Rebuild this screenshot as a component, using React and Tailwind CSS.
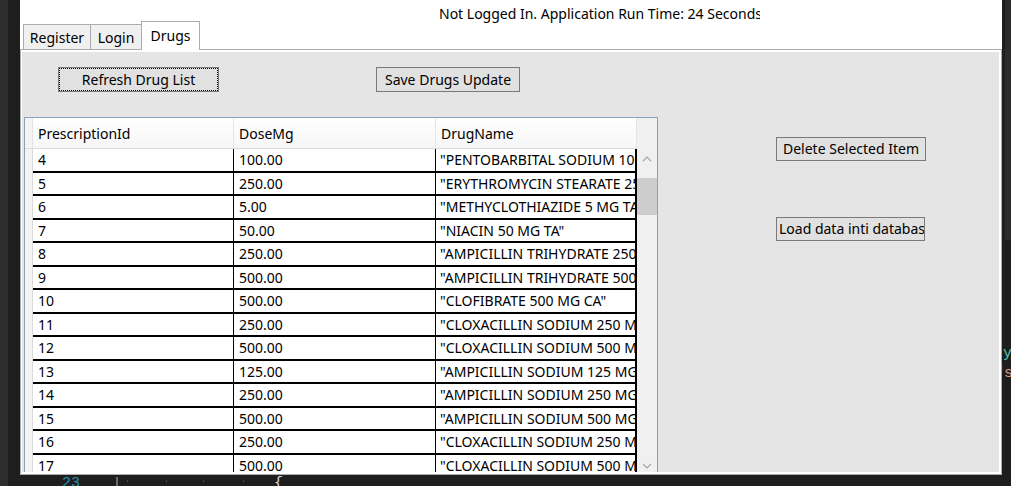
import React from 'react';

const drugs = [
  ['4', '100.00', '"PENTOBARBITAL SODIUM 100 MG CA"'],
  ['5', '250.00', '"ERYTHROMYCIN STEARATE 250 MG TA"'],
  ['6', '5.00', '"METHYCLOTHIAZIDE 5 MG TA"'],
  ['7', '50.00', '"NIACIN 50 MG TA"'],
  ['8', '250.00', '"AMPICILLIN TRIHYDRATE 250 MG CA"'],
  ['9', '500.00', '"AMPICILLIN TRIHYDRATE 500 MG CA"'],
  ['10', '500.00', '"CLOFIBRATE 500 MG CA"'],
  ['11', '250.00', '"CLOXACILLIN SODIUM 250 MG CA"'],
  ['12', '500.00', '"CLOXACILLIN SODIUM 500 MG CA"'],
  ['13', '125.00', '"AMPICILLIN SODIUM 125 MG VI"'],
  ['14', '250.00', '"AMPICILLIN SODIUM 250 MG VI"'],
  ['15', '500.00', '"AMPICILLIN SODIUM 500 MG VI"'],
  ['16', '250.00', '"CLOXACILLIN SODIUM 250 MG CA"'],
  ['17', '500.00', '"CLOXACILLIN SODIUM 500 MG CA"'],
];

function Chevron({ down }) {
  return (
    <svg width="10" height="6" viewBox="0 0 10 6">
      <polyline
        points={down ? '1,1 5,5 9,1' : '1,5 5,1 9,5'}
        fill="none"
        stroke="#a6a6a6"
        strokeWidth="1.2"
      />
    </svg>
  );
}

function WinButton({ className, children, focused }) {
  return (
    <button className={`h-[25px] bg-[#e1e1e1] border border-[#7a7a7a] text-[14px] leading-[18px] text-black shrink-0 ${className}`}>
      {focused ? (
        <span className="flex h-full w-full items-center justify-center border border-dotted border-black">
          {children}
        </span>
      ) : (
        children
      )}
    </button>
  );
}

function DrugGrid() {
  return (
    <div className="ml-[2px] flex h-[360px] w-[634px] shrink-0 border border-[#8aa0bd] bg-white">
      {/* cells */}
      <div className="flex w-[612px] flex-col">
        <div className="flex h-[31px] shrink-0 border-b border-[#dcdcdc] bg-gradient-to-b from-white to-[#f6f6f6]">
          <div className="w-[8px] border-r border-[#e3e3e3] bg-[#f4f4f4]" />
          <div className="flex w-[201px] items-center border-r border-[#e6e6e6] pl-[5px]">PrescriptionId</div>
          <div className="flex w-[202px] items-center border-r border-[#e6e6e6] pl-[5px]">DoseMg</div>
          <div className="flex w-[201px] items-center border-r border-[#e6e6e6] pl-[5px]">DrugName</div>
        </div>
        {drugs.map((d) => (
          <div key={d[0]} className="flex h-[23.5px] shrink-0">
            <div className="w-[8px] border-r border-[#dadada] bg-[#f4f4f4]" />
            <div className="flex w-[201px] items-center border-r border-b-2 border-black pl-[5px]">{d[0]}</div>
            <div className="flex w-[202px] items-center border-r border-b-2 border-black pl-[5px]">{d[1]}</div>
            <div className="flex w-[201px] items-center overflow-hidden whitespace-nowrap border-r-2 border-b-2 border-black pl-[4px]">
              {d[2]}
            </div>
          </div>
        ))}
      </div>
      {/* vertical scrollbar */}
      <div className="flex w-[20px] flex-col bg-[#f0f0f0]">
        <div className="h-[31px] shrink-0 bg-[#f0f0f0]" />
        <div className="flex h-[20px] shrink-0 items-center justify-center">
          <Chevron />
        </div>
        <div className="mt-[9px] h-[37px] shrink-0 bg-[#cdcdcd]" />
        <div className="flex-1" />
        <div className="flex h-[20px] shrink-0 items-center justify-center">
          <Chevron down />
        </div>
      </div>
    </div>
  );
}

function AppWindow() {
  return (
    <div className="flex h-[475px] w-[982px] shrink-0 flex-col bg-white">
      {/* status */}
      <div className="h-[21px] shrink-0 pl-[419px] pt-[5px]">
        <div className="w-[321px] overflow-hidden whitespace-nowrap leading-[18px]">
          Not Logged In. Application Run Time: 24 Seconds
        </div>
      </div>

      {/* tabs */}
      <div className="flex h-[28px] shrink-0 items-end pl-[3px]">
        <div className="flex h-[25px] w-[68px] items-center justify-center border border-b-0 border-[#acacac] bg-[#f0f0f0]">
          Register
        </div>
        <div className="flex h-[25px] w-[50px] items-center justify-center border-t border-[#acacac] bg-[#f0f0f0]">
          Login
        </div>
        <div className="relative z-10 -mb-px flex h-[29px] w-[59px] items-center justify-center border border-b-0 border-[#acacac] bg-white pb-[2px]">
          Drugs
        </div>
      </div>

      {/* tab page */}
      <div className="flex min-h-0 flex-1 flex-col border border-[#acacac]">
        <div className="flex min-h-0 flex-1 flex-col overflow-hidden border-t-2 border-r-2 border-b-2 border-l border-white bg-[#e5e5e5]">
          <div className="flex shrink-0 pt-[15px]">
            <WinButton className="ml-[36px] w-[161px]" focused>
              Refresh Drug List
            </WinButton>
            <WinButton className="ml-[157px] w-[144px]">Save Drugs Update</WinButton>
          </div>

          <div className="mt-[25px] flex">
            <DrugGrid />
            <div className="ml-[118px] flex flex-col pt-[20px]">
              <button className="h-[24px] w-[150px] border border-[#7a7a7a] bg-[#e1e1e1] text-[14px] leading-[18px] text-black">
                Delete Selected Item
              </button>
              <button className="mt-[56px] flex h-[24px] w-[149px] items-center overflow-hidden whitespace-nowrap border border-[#7a7a7a] bg-[#e1e1e1] pl-[2px] text-[14px] leading-[18px] text-black">
                Load data inti database
              </button>
            </div>
          </div>
        </div>
      </div>
    </div>
  );
}

export default function App() {
  return (
    <div className="flex h-[486px] w-[1011px] overflow-hidden bg-[#1e1e1e] text-[14px] text-black [font-family:'Noto_Sans',sans-serif]">
      <div className="w-[8px] shrink-0 bg-[#2d2d2d]" />
      <div className="flex w-[1003px] flex-col">
        <div className="flex h-[475px] shrink-0">
          <div className="w-[12px] shrink-0" />
          <AppWindow />
          {/* editor peeking out on the right */}
          <div className="flex w-[9px] flex-col overflow-hidden [font-family:'Liberation_Mono',monospace] text-[15px] leading-[20px]">
            <div className="ml-[3px] h-[240px] shrink-0 bg-[#2b2b2b]" />
            <div className="mt-[104px] ml-[1px] whitespace-nowrap text-[#4ec9b0]">y</div>
            <div className="-ml-[7px] whitespace-nowrap text-[#d69d85]">"s</div>
          </div>
        </div>
        {/* editor below the window */}
        <div className="flex h-[11px] items-start overflow-hidden [font-family:'Liberation_Mono',monospace] text-[15px] leading-[15px]">
          <span className="ml-[54px] mt-[1px] text-[#2b91af]">23</span>
          <div className="ml-[36px] mt-[2px] h-[9px] w-[2px] bg-[#6a6a6a]" />
          <div className="ml-[9px] mt-[5px] h-[2px] w-px bg-[#4a4a4a]" />
          <div className="ml-[38px] mt-[5px] h-[2px] w-px bg-[#4a4a4a]" />
          <div className="ml-[36px] mt-[5px] h-[2px] w-px bg-[#4a4a4a]" />
          <div className="ml-[39px] mt-[5px] h-[2px] w-px bg-[#4a4a4a]" />
          <span className="ml-[30px] mt-[1px] text-[#dcdcdc]">{'{'}</span>
        </div>
      </div>
    </div>
  );
}
